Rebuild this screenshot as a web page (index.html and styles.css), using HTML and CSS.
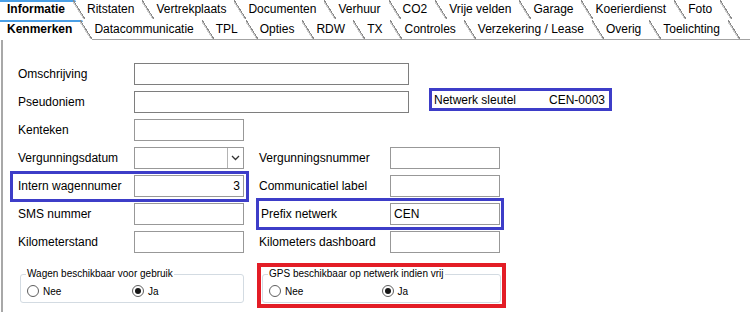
FILE: index.html
```html
<!DOCTYPE html>
<html lang="nl">
<head>
  <meta charset="UTF-8" />
  <title>Kenmerken</title>
  <link rel="stylesheet" href="styles.css">
</head>
<body>

<div id="tabs">
  <div class="tab-row">
    <span class="tab active">Informatie</span>
    <span class="tab">Ritstaten</span>
    <span class="tab">Vertrekplaats</span>
    <span class="tab">Documenten</span>
    <span class="tab">Verhuur</span>
    <span class="tab">CO2</span>
    <span class="tab">Vrije velden</span>
    <span class="tab">Garage</span>
    <span class="tab">Koerierdienst</span>
    <span class="tab">Foto</span>
  </div>
  <div class="tab-row lower">
    <span class="tab active">Kenmerken</span>
    <span class="tab">Datacommunicatie</span>
    <span class="tab">TPL</span>
    <span class="tab">Opties</span>
    <span class="tab">RDW</span>
    <span class="tab">TX</span>
    <span class="tab">Controles</span>
    <span class="tab">Verzekering / Lease</span>
    <span class="tab">Overig</span>
    <span class="tab">Toelichting</span>
  </div>
</div>

<div id="page">
  <div class="row">
    <div class="pair">
      <span class="lbl">Omschrijving</span>
      <div class="input wide"></div>
    </div>
  </div>

  <div class="row">
    <div class="pair">
      <span class="lbl">Pseudoniem</span>
      <div class="input wide"></div>
    </div>
    <div class="key">
      <span>Netwerk sleutel</span>
      <span>CEN-0003</span>
    </div>
  </div>

  <div class="row">
    <div class="pair">
      <span class="lbl">Kenteken</span>
      <div class="input"></div>
    </div>
  </div>

  <div class="row">
    <div class="pair">
      <span class="lbl">Vergunningsdatum</span>
      <div class="input combo">
        <span class="drop">
          <svg width="9" height="6" viewBox="0 0 9 6"><path d="M1 1 L4.5 4.5 L8 1" fill="none" stroke="#333" stroke-width="1.3"/></svg>
        </span>
      </div>
    </div>
    <div class="pair right">
      <span class="lbl">Vergunningsnummer</span>
      <div class="input"></div>
    </div>
  </div>

  <div class="row">
    <div class="pair hl-left">
      <span class="lbl">Intern wagennumer</span>
      <div class="input num">3</div>
    </div>
    <div class="pair right">
      <span class="lbl">Communicatiel label</span>
      <div class="input"></div>
    </div>
  </div>

  <div class="row">
    <div class="pair">
      <span class="lbl">SMS nummer</span>
      <div class="input"></div>
    </div>
    <div class="pair right hl-right">
      <span class="lbl">Prefix netwerk</span>
      <div class="input">CEN</div>
    </div>
  </div>

  <div class="row">
    <div class="pair">
      <span class="lbl">Kilometerstand</span>
      <div class="input"></div>
    </div>
    <div class="pair right">
      <span class="lbl">Kilometers dashboard</span>
      <div class="input"></div>
    </div>
  </div>

  <div class="groups">
    <fieldset class="group">
      <legend>Wagen beschikbaar voor gebruik</legend>
      <div class="options">
        <span class="opt"><span class="radio"></span>Nee</span>
        <span class="opt"><span class="radio on"></span>Ja</span>
      </div>
    </fieldset>

    <div class="red">
      <fieldset class="group gps">
        <legend>GPS beschikbaar op netwerk indien vrij</legend>
        <div class="options">
          <span class="opt"><span class="radio"></span>Nee</span>
          <span class="opt"><span class="radio on"></span>Ja</span>
        </div>
      </fieldset>
    </div>
  </div>
</div>

</body>
</html>
```

FILE: styles.css
```css
html, body {
  margin: 0; padding: 0;
  background: #fff;
  font-family: "Liberation Sans", Arial, sans-serif;
  font-size: 12px;
  color: #000;
  overflow: hidden;
}

/* tabbladen */
#tabs { height: 40px; }

.tab-row {
  display: flex;
  height: 20px;
  box-sizing: border-box;
}

.tab-row.lower { border-bottom: 1px solid #a3a3a3; }

.tab {
  position: relative;
  padding: 0 20px 0 2px;
  height: 20px;
  line-height: 19px;
  white-space: nowrap;
}

.tab:first-child { padding-left: 7px; }

.tab::after {
  content: '';
  position: absolute;
  right: 0; top: 0;
  width: 12px; height: 19px;
  background: linear-gradient(to top right,
    transparent calc(50% - 1.5px),
    #cfcfcf calc(50% - 1.5px), #cfcfcf calc(50% - 0.5px),
    #8a8a8a calc(50% - 0.5px), #8a8a8a calc(50% + 0.5px),
    transparent calc(50% + 0.5px));
}

.tab.active {
  font-weight: bold;
  background: #fff;
  z-index: 1;
}

.tab.active::before {
  content: '';
  position: absolute;
  left: 0; top: 0; right: 9px;
  height: 2px;
  background: #4a9fe6;
  border-top-right-radius: 4px;
}

/* formulier */
#page {
  margin-left: 1px;
  border-left: 2px solid #a8a8a8;
  height: 272px;
  box-sizing: border-box;
  padding: 20px 0 0 15px;
}

.row {
  display: flex;
  align-items: center;
  height: 28px;
}

.pair {
  display: flex;
  align-items: center;
  box-sizing: border-box;
}

.lbl { width: 116px; white-space: nowrap; }

.pair.right { margin-left: 15px; }
.pair.right .lbl { width: 131px; }

.input {
  width: 110px; height: 22px;
  box-sizing: border-box;
  border: 1px solid #989898;
  background: #fff;
  padding: 0 3px;
  line-height: 20px;
}

.input.wide { width: 275px; border-color: #7e7e7e; }
.input.num { text-align: right; }

.combo {
  display: flex;
  justify-content: flex-end;
  padding: 0;
}

.combo .drop {
  width: 15px;
  border-left: 1px solid #b4b4b4;
  display: flex;
  align-items: center;
  justify-content: center;
}

.key {
  align-self: flex-start;
  margin-left: 20px;
  width: 183px; height: 23px;
  box-sizing: border-box;
  border: 3px solid #3d3dc8;
  display: flex;
  justify-content: space-between;
  align-items: center;
  padding: 0 4px 0 2px;
}

.hl-left {
  height: 31px;
  border: 3px solid #3d3dc8;
  margin: 0 -5px 0 -8px;
  padding: 0 2px 0 5px;
}

.pair.hl-right {
  height: 32px;
  border: 3px solid #3d3dc8;
  margin: 0 -4px 0 12px;
  padding: 0 1px 0 2px;
}

.pair.hl-right .lbl { width: 129px; }

/* groepen onderaan */
.groups {
  display: flex;
  align-items: flex-start;
  margin-top: 7px;
}

.group {
  margin: 5px 0 0 2px;
  width: 224px;
  box-sizing: border-box;
  border: 1px solid #d3dbe2;
  border-radius: 3px;
  padding: 5px 6px 5px 6px;
  min-width: 0;
}

.group legend {
  font-size: 10px;
  line-height: 12px;
  padding: 0 1px;
  margin-left: -1px;
}

.red {
  margin-left: 13px;
  border: 4px solid #e31d26;
  padding: 1px;
}

.group.gps { margin: 0; width: 239px; }

.options {
  display: flex;
  align-items: center;
  height: 12px;
  font-size: 10px;
}

.opt {
  flex: 1;
  display: flex;
  align-items: center;
  gap: 4px;
}

.radio {
  position: relative;
  width: 12px; height: 12px;
  box-sizing: border-box;
  border: 1px solid #5e5e5e;
  border-radius: 50%;
  background: #fff;
}

.radio.on::after {
  content: '';
  position: absolute;
  top: 2px; left: 2px;
  width: 6px; height: 6px;
  border-radius: 50%;
  background: #161616;
}
```
